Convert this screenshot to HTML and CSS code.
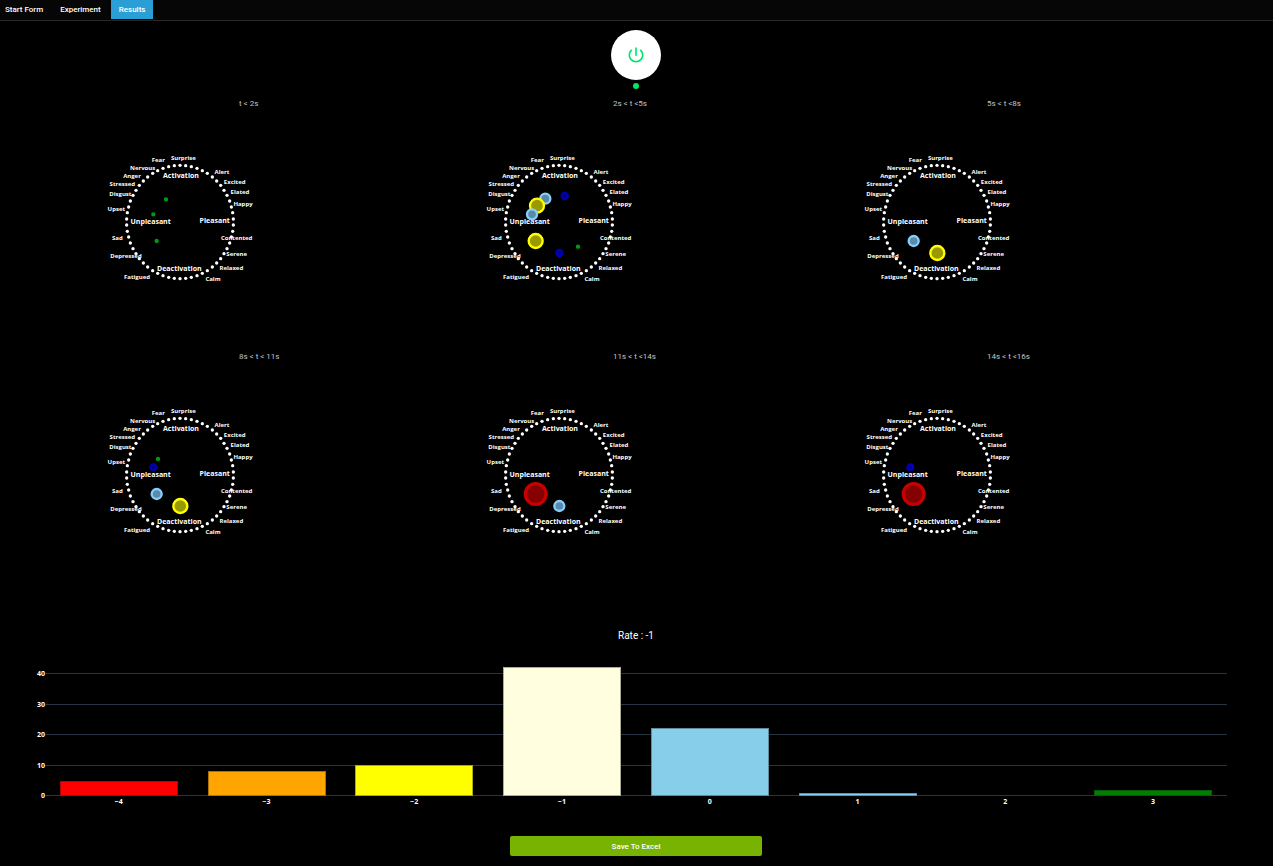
FILE: index.html
```html
<!DOCTYPE html>
<html lang="en">
<head>
<meta charset="utf-8">
<title>Results</title>
<link rel="stylesheet" href="styles.css">
</head>
<body>
<nav class="tabs">
  <a class="tab" href="#start">Start Form</a>
  <a class="tab" href="#experiment">Experiment</a>
  <a class="tab tab-active" href="#results" aria-current="page">Results</a>
</nav>
<main class="page">
  <div class="power">
    <button class="power-button" type="button" aria-label="Power">
      <svg class="power-icon" viewBox="0 0 24 24" aria-hidden="true"><path d="M13 3h-2v10h2V3zm4.83 2.17l-1.42 1.42C17.99 7.86 19 9.81 19 12c0 3.87-3.13 7-7 7s-7-3.13-7-7c0-2.19 1.01-4.14 2.58-5.42L6.17 5.17C4.23 6.82 3 9.26 3 12c0 4.97 4.03 9 9 9s9-4.03 9-9c0-2.74-1.23-5.18-3.17-6.83z"/></svg>
    </button>
    <span class="power-status"></span>
  </div>

  <section class="period">
    <div class="titles"><h2 class="title">t &lt; 2s</h2><h2 class="title">2s &lt; t &lt;5s</h2><h2 class="title">5s &lt; t &lt;8s</h2></div>
    <div class="wheels"><svg class="wheel"></svg><svg class="wheel"></svg><svg class="wheel"></svg></div>
  </section>
  <section class="period">
    <div class="titles"><h2 class="title">8s &lt; t &lt; 11s</h2><h2 class="title">11s &lt; t &lt;14s</h2><h2 class="title">14s &lt; t &lt;16s</h2></div>
    <div class="wheels"><svg class="wheel"></svg><svg class="wheel"></svg><svg class="wheel"></svg></div>
  </section>

  <p class="rate">Rate : -1</p>

  <section class="chart">
    <div class="y-axis"><span>40</span><span>30</span><span>20</span><span>10</span><span>0</span></div>
    <div class="plot">
      <div class="lines"><i class="line"></i><i class="line"></i><i class="line"></i><i class="line"></i><i class="line"></i></div>
      <div class="bars">
        <div class="bar bar-red" style="height:12.5%"></div>
        <div class="bar bar-orange" style="height:20%"></div>
        <div class="bar bar-yellow" style="height:25%"></div>
        <div class="bar bar-cream" style="height:105%"></div>
        <div class="bar bar-sky" style="height:55%"></div>
        <div class="bar bar-light" style="height:2.5%"></div>
        <div class="bar" style="height:0%"></div>
        <div class="bar bar-green" style="height:5%"></div>
      </div>
    </div>
    <div class="x-axis"><span>−4</span><span>−3</span><span>−2</span><span>−1</span><span>0</span><span>1</span><span>2</span><span>3</span></div>
  </section>

  <button class="save" type="button">Save To Excel</button>
</main>
<script src="script.js"></script>
</body>
</html>
```
FILE: styles.css
```css
* { box-sizing: border-box; }
body {
  margin: 0;
  background: #000;
  color: #fff;
  font-family: Roboto, "Liberation Sans", sans-serif;
  font-size: 8px;
  line-height: 12px;
}
.tabs {
  display: flex;
  height: 21px;
  background: #060606;
  border-bottom: 1px solid #282828;
}
.tab {
  height: 19px;
  padding: 0 8px;
  border-right: 1px solid #060606;
  line-height: 19px;
  font-weight: 500;
  color: #fff;
  text-decoration: none;
}
.tab:first-child { padding-left: 5px; }
.tab-active { margin-left: 1px; background: #2a9fd6; }
.page {
  display: flex;
  flex-direction: column;
  padding: 9px 1px 10px 0;
}
.power {
  display: flex;
  flex-direction: column;
  align-items: center;
  gap: 3px;
  margin-bottom: 9px;
}
.power-button {
  display: flex;
  align-items: center;
  justify-content: center;
  width: 50px;
  height: 50px;
  padding: 0;
  border: 0;
  border-radius: 50%;
  background: #fff;
}
.power-icon { width: 20px; height: 20px; fill: #00e66b; }
.power-status { width: 6px; height: 6px; border-radius: 50%; background: #00e66b; }

.period { margin-bottom: 60px; }
.titles, .wheels { display: grid; }
.titles {
  grid-template-columns: 239fr 374fr 374fr 285fr;
  margin-bottom: 35px;
}
.wheels { grid-template-columns: 90fr 379fr 378fr 425fr; }
.period + .period .titles { margin-top: 1px; }
.title { margin: 0; font-size: 8px; font-weight: 400; color: #c4c4c4; }
.title:first-child, .wheel:first-child { grid-column-start: 2; }
.wheel { display: block; width: 180px; height: 145px; }
.wheel text {
  font-family: "Open Sans", "Noto Sans", sans-serif;
  font-weight: 700;
  fill: #fff;
  text-anchor: middle;
}
.emotion { font-size: 18px; }
.axis-name { font-size: 21px; }
.dot { fill: #fff; }
.mark { stroke-width: 7px; }
.mark-green { fill: #006400; stroke: #009a14; }
.mark-blue { fill: #000087; stroke: #0000b0; }
.mark-sky { fill: #5a8aaa; stroke: #87cefa; }
.mark-yellow { fill: #999900; stroke: #ffff00; }
.mark-red { fill: #850000; stroke: #c80000; stroke-width: 10px; }

.period + .period { padding-top: 0; }
.rate {
  margin: 27px 0 31px;
  font-size: 10px;
  text-align: center;
}
.period + .period { margin-top: 0; }
.chart {
  display: grid;
  grid-template-columns: 45fr 1182fr 45fr;
  row-gap: 1px;
  margin-bottom: 30px;
  font-family: "Open Sans", "DejaVu Sans", sans-serif;
  font-size: 7px;
  font-weight: 700;
  line-height: 9px;
}
.y-axis {
  display: flex;
  flex-direction: column;
  justify-content: space-between;
  margin: -4px 0;
  text-align: right;
}
.plot { display: grid; height: 123px; }
.lines, .bars { grid-area: 1 / 1; display: flex; height: 123px; }
.lines { flex-direction: column; justify-content: space-between; }
.line { height: 1px; background: #283442; }
.bars { align-items: flex-end; justify-content: space-around; }
.bar { width: 10%; border: 0 solid rgba(17, 17, 17, 0.35); }
.bar[class*="bar-"] { border-width: 1px; }
.bar-red { background: #f00; }
.bar-orange { background: #ffa500; }
.bar-yellow { background: #ff0; }
.bar-cream { background: #ffffe0; }
.bar-sky { background: #87ceeb; }
.bar-light { background: #87cefa; }
.bar-green { background: #008000; }
.x-axis {
  grid-column: 2;
  display: grid;
  grid-template-columns: repeat(8, 1fr);
  text-align: center;
}
.save {
  align-self: center;
  width: 252px;
  height: 20px;
  padding: 0;
  border: 0;
  border-radius: 2px;
  background: #77b300;
  color: #fff;
  font-family: inherit;
  font-size: 8px;
  font-weight: 500;
}
```
FILE: script.js
```js
const emotions = [
  ["Surprise", 280, 41], ["Fear", 205, 47], ["Nervous", 158, 70], ["Anger", 126, 94],
  ["Stressed", 97, 119], ["Disgust", 91, 148], ["Upset", 79, 193], ["Sad", 82, 279],
  ["Depressed", 108, 334], ["Fatigued", 141, 396], ["Calm", 369, 403], ["Relaxed", 424, 371],
  ["Serene", 440, 329], ["Contented", 440, 279], ["Happy", 459, 178], ["Elated", 450, 141],
  ["Excited", 434, 113], ["Alert", 396, 82]
];
const axes = [
  ["Activation", 273, 93], ["Deactivation", 268, 370], ["Unpleasant", 182, 229], ["Pleasant", 374, 227]
];
const radius = { green: 3, blue: 9, sky: 15, yellow: 21, red: 31 };
const marks = [
  [["green", 228, 163], ["green", 190, 208], ["green", 200, 288]],
  [["blue", 287, 153], ["sky", 229, 161], ["yellow", 204, 182], ["sky", 189, 208],
   ["yellow", 200, 288], ["green", 327, 305], ["blue", 271, 324]],
  [["sky", 200, 288], ["yellow", 271, 324]],
  [["green", 204, 183], ["blue", 190, 208], ["sky", 200, 288], ["yellow", 271, 324]],
  [["red", 200, 288], ["sky", 271, 324]],
  [["blue", 190, 208], ["red", 200, 288]]
];

function add(parent, name, attributes, text) {
  const node = document.createElementNS("http://www.w3.org/2000/svg", name);
  for (const key in attributes) node.setAttribute(key, attributes[key]);
  if (text) node.textContent = text;
  parent.appendChild(node);
}

const dotCount = 58;
document.querySelectorAll(".wheel").forEach((wheel, index) => {
  wheel.setAttribute("viewBox", "0 0 540 435");
  for (let i = 0; i < dotCount; i++) {
    const angle = i * 2 * Math.PI / dotCount;
    add(wheel, "circle", {
      class: "dot", r: 5,
      cx: Math.round(270 + 160 * Math.sin(angle)),
      cy: Math.round(231 - 170 * Math.cos(angle))
    });
  }
  emotions.forEach(([label, x, y]) => add(wheel, "text", { class: "emotion", x, y: y + 5 }, label));
  axes.forEach(([label, x, y]) => add(wheel, "text", { class: "axis-name", x, y: y + 7 }, label));
  marks[index].forEach(([color, cx, cy]) =>
    add(wheel, "circle", { class: "mark mark-" + color, cx, cy, r: radius[color] }));
});
```
